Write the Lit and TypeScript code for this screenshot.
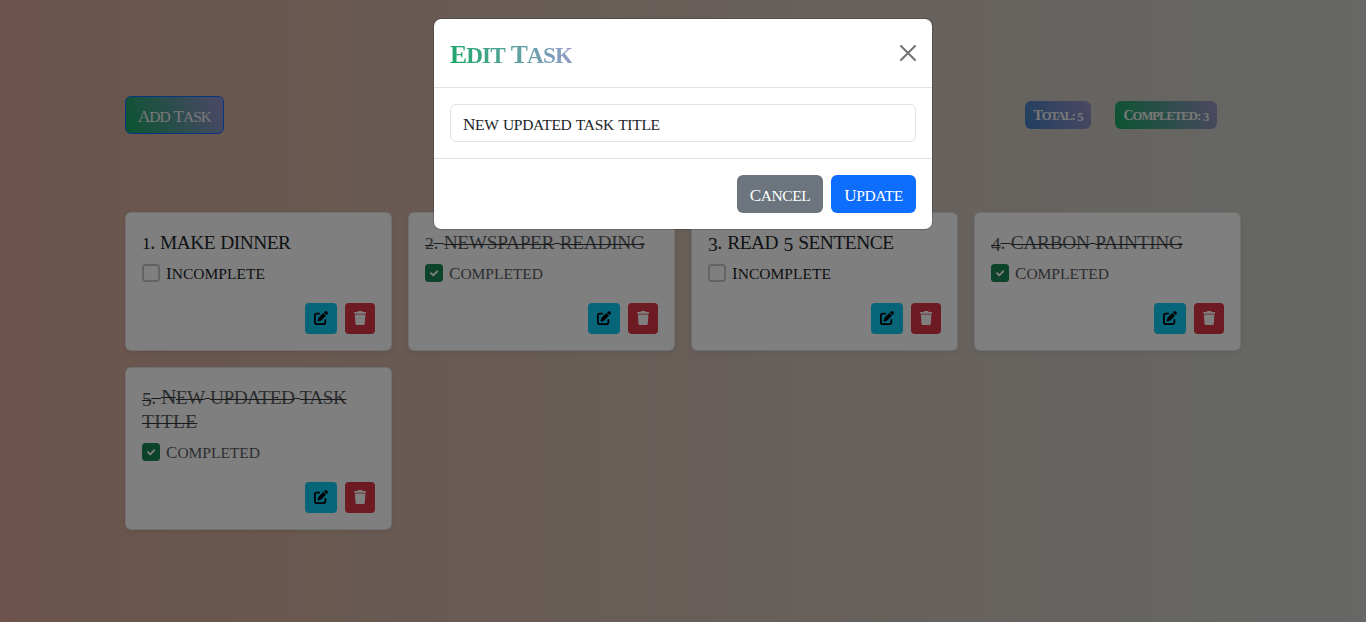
import { LitElement, html, css, svg } from "lit";
import { customElement, property } from "lit/decorators.js";
import { classMap } from "lit/directives/class-map.js";

/** Small-caps line of text, tracked so that it fills `fit` pixels. */
@customElement("sc-text")
class ScText extends LitElement {
  @property() text = "";
  @property({ type: Number }) fit = 0;
  @property({ type: Boolean }) struck = false;

  static styles = css`
    :host { display: block; white-space: pre; padding-top: 1px; margin-bottom: -1px; }
    .struck { text-decoration: line-through 1px #303438; }
    .line span { line-height: 0; }
    .upper { font-size: 1.07em; }
    .lower { font-size: 0.97em; text-transform: uppercase; }
    .short { font-size: 0.88em; }
    .drop { font-size: 0.98em; vertical-align: -0.1em; }
    .gap { word-spacing: 0.04em; }
  `;

  firstUpdated() {
    const line = this.renderRoot.querySelector<HTMLElement>(".line");
    if (!line || !this.fit) return;
    const natural = line.getBoundingClientRect().width;
    line.style.letterSpacing = `${(this.fit - natural) / (this.text.length - 1)}px`;
  }

  render() {
    const runs = this.text.match(/[A-Z]+|[a-z]+|[012]+|[3-9]+|[^A-Za-z0-9]+/g) ?? [];
    const kind = (r: string) =>
      /[A-Z]/.test(r) ? "upper" : /[a-z]/.test(r) ? "lower" : /[012]/.test(r) ? "short" : /[3-9]/.test(r) ? "drop" : "gap";
    return html`<span class=${classMap({ line: true, struck: this.struck })}>${runs.map(
      (r) => html`<span class=${kind(r)}>${r}</span>`
    )}</span>`;
  }
}

const editIcon = svg`<path d="M471.6 21.7c-21.9-21.9-57.3-21.9-79.2 0L362.3 51.7l97.9 97.9 30.1-30.1c21.9-21.9 21.9-57.3 0-79.2L471.6 21.7zm-299.2 220c-6.1 6.1-10.8 13.6-13.5 21.9l-29.6 88.8c-2.9 8.6-.6 18.1 5.8 24.6s15.9 8.7 24.6 5.8l88.8-29.6c8.2-2.7 15.7-7.4 21.9-13.5L437.7 172.3 339.7 74.3 172.4 241.7zM96 64C43 64 0 107 0 160V416c0 53 43 96 96 96H352c53 0 96-43 96-96V320c0-17.7-14.3-32-32-32s-32 14.3-32 32v96c0 17.7-14.3 32-32 32H96c-17.7 0-32-14.3-32-32V160c0-17.7 14.3-32 32-32h96c17.7 0 32-14.3 32-32s-14.3-32-32-32H96z"/>`;
const trashIcon = svg`<path d="M135.2 17.7L128 32H32C14.3 32 0 46.3 0 64S14.3 96 32 96H416c17.7 0 32-14.3 32-32s-14.3-32-32-32H320l-7.2-14.3C307.4 6.8 296.3 0 284.2 0H163.8c-12.1 0-23.2 6.8-28.6 17.7zM416 128H32L53.2 467c1.6 25.3 22.6 45 47.9 45H346.9c25.3 0 46.3-19.7 47.9-45L416 128z"/>`;

interface Line { text: string; fit: number; }
interface Task { lines: Line[]; done: boolean; }

@customElement("task-card")
class TaskCard extends LitElement {
  @property({ attribute: false }) task!: Task;

  static styles = css`
    :host {
      display: block; box-sizing: border-box; padding: 16px;
      background: #fff;
      border: 1px solid rgba(0, 0, 0, 0.12); border-radius: 6px;
      box-shadow: 0 2px 4px rgba(0, 0, 0, 0.075);
      color: #212529;
    }
    .title { font-size: 20px; line-height: 24px; margin-bottom: 8px; }
    .done { color: #595c5f; }
    .status { display: flex; align-items: center; gap: 6px; height: 24px; font-size: 16px; line-height: 24px; }
    .box { width: 18px; height: 18px; flex: none; display: block; }
    .actions { display: flex; justify-content: flex-end; gap: 8px; margin-top: 18px; }
    button { display: flex; align-items: center; justify-content: center; height: 31px; padding: 0 8px 1px; border: 0; border-radius: 4px; box-sizing: border-box; }
    .edit { width: 32px; background: #0dcaf0; color: #000; }
    .trash { width: 30px; background: #dc3545; color: #fff; }
    .glyph { height: 14px; width: 14px; flex: none; fill: currentColor; display: block; }
    .trash .glyph { width: 12.25px; }
  `;

  render() {
    const { lines, done } = this.task;
    return html`
      <div class=${classMap({ title: true, done })}>
        ${lines.map((l) => html`<sc-text .text=${l.text} .fit=${l.fit} .struck=${done}></sc-text>`)}
      </div>
      <div class=${classMap({ status: true, done })}>
        <svg class="box" viewBox="0 0 18 18" fill="none">
          ${done
            ? svg`<rect width="18" height="18" rx="3.5" fill="#198754"/><path d="M6 9.2l2.2 2.2 4-4.1" stroke="#fff" stroke-width="1.9" stroke-linecap="round" stroke-linejoin="round"/>`
            : svg`<rect x="1" y="1" width="16" height="16" rx="2.5" stroke="#c4c4c4" stroke-width="1.8"/>`}
        </svg>
        <sc-text .text=${done ? "Completed" : "Incomplete"} .fit=${done ? 94 : 99}></sc-text>
      </div>
      <div class="actions">
        <button class="edit" aria-label="Edit"><svg class="glyph" viewBox="0 0 512 512">${editIcon}</svg></button>
        <button class="trash" aria-label="Delete"><svg class="glyph" viewBox="0 0 448 512">${trashIcon}</svg></button>
      </div>
    `;
  }
}

const TASKS: Task[] = [
  { lines: [{ text: "1. make dinner", fit: 149 }], done: false },
  { lines: [{ text: "2. newspaper reading", fit: 220 }], done: true },
  { lines: [{ text: "3. read 5 sentence", fit: 186 }], done: false },
  { lines: [{ text: "4. carbon painting", fit: 192 }], done: true },
  { lines: [{ text: "5. New updated task", fit: 205 }, { text: "title", fit: 55 }], done: true },
];

@customElement("app-root")
class AppRoot extends LitElement {
  static styles = css`
    :host {
      display: block; position: relative; height: 622px; overflow: hidden;
      font-family: "Liberation Serif", serif; color: #212529;
      background: linear-gradient(to right, #dca498 0, #d5a998 50px, #d2b0a0 250px, #ccd0cc 100%);
    }
    .page { width: 1116px; margin: 0 auto; padding-top: 96px; }
    .toolbar { display: flex; align-items: center; justify-content: space-between; height: 38px; margin-bottom: 78px; padding-right: 24px; }
    .btn { display: flex; align-items: center; justify-content: center; box-sizing: border-box; height: 38px; border: 1px solid transparent; border-radius: 6px; padding: 1px 0 0; font: 16px/24px "Liberation Serif", serif; color: #fff; }
    .add { width: 99px; border-color: #0d6efd; background: linear-gradient(65deg, #14a863, #9b8fd0); color: #f0f0f0; }
    .badges { display: flex; gap: 24px; }
    .badge { display: flex; align-items: center; justify-content: center; box-sizing: border-box; height: 28px; border-radius: 6px; font-size: 13px; line-height: 16px; font-weight: 700; color: #f0f0f0; }
    .total { width: 66px; background: linear-gradient(65deg, #3f80c0, #9b8fc4); }
    .completed { width: 102px; background: linear-gradient(65deg, #14a863, #9b8fc4); }
    .grid { display: grid; grid-template-columns: repeat(4, 267px); gap: 16px; align-items: start; }
    .backdrop { position: absolute; inset: 0; background: rgba(0, 0, 0, 0.5); }
    .modal { position: absolute; top: 18px; left: 433px; width: 500px; height: 212px; box-sizing: border-box; background: #fff; background-clip: padding-box; border: 1px solid rgba(0, 0, 0, 0.175); border-radius: 8px; }
    .head { display: flex; align-items: center; justify-content: space-between; height: 69px; padding: 0 16px; box-sizing: border-box; border-bottom: 1px solid #dee2e6; }
    .heading { font-size: 24px; font-weight: 700; line-height: 36px; padding-top: 2px; color: transparent; background: linear-gradient(65deg, #14a863, #9b9bd0); background-clip: text; -webkit-background-clip: text; }
    .close { width: 16px; height: 16px; opacity: 0.55; display: block; }
    .body { height: 70px; padding: 16px; box-sizing: border-box; }
    .input { height: 38px; box-sizing: border-box; border: 1px solid #dee2e6; border-radius: 6px; padding: 7px 12px; font-size: 16px; line-height: 24px; }
    .foot { display: flex; align-items: center; justify-content: flex-end; gap: 8px; height: 71px; padding: 0 16px; box-sizing: border-box; border-top: 1px solid #dee2e6; }
    .cancel { width: 86px; background: #6c757d; }
    .update { width: 85px; background: #0d6efd; }
  `;

  render() {
    return html`
      <main class="page">
        <div class="toolbar">
          <button class="btn add"><sc-text text="Add Task" fit="74"></sc-text></button>
          <div class="badges">
            <span class="badge total"><sc-text text="Total: 5" fit="50"></sc-text></span>
            <span class="badge completed"><sc-text text="Completed: 3" fit="86"></sc-text></span>
          </div>
        </div>
        <div class="grid">${TASKS.map((t) => html`<task-card .task=${t}></task-card>`)}</div>
      </main>
      <div class="backdrop"></div>
      <section class="modal" role="dialog">
        <header class="head">
          <sc-text class="heading" text="Edit Task" fit="123"></sc-text>
          <svg class="close" viewBox="0 0 16 16"><path d="M1 1l14 14M15 1L1 15" stroke="#000" stroke-width="2" stroke-linecap="round"/></svg>
        </header>
        <div class="body"><div class="input"><sc-text text="New updated task title" fit="197"></sc-text></div></div>
        <footer class="foot">
          <button class="btn cancel"><sc-text text="Cancel" fit="61"></sc-text></button>
          <button class="btn update"><sc-text text="Update" fit="59"></sc-text></button>
        </footer>
      </section>
    `;
  }
}
